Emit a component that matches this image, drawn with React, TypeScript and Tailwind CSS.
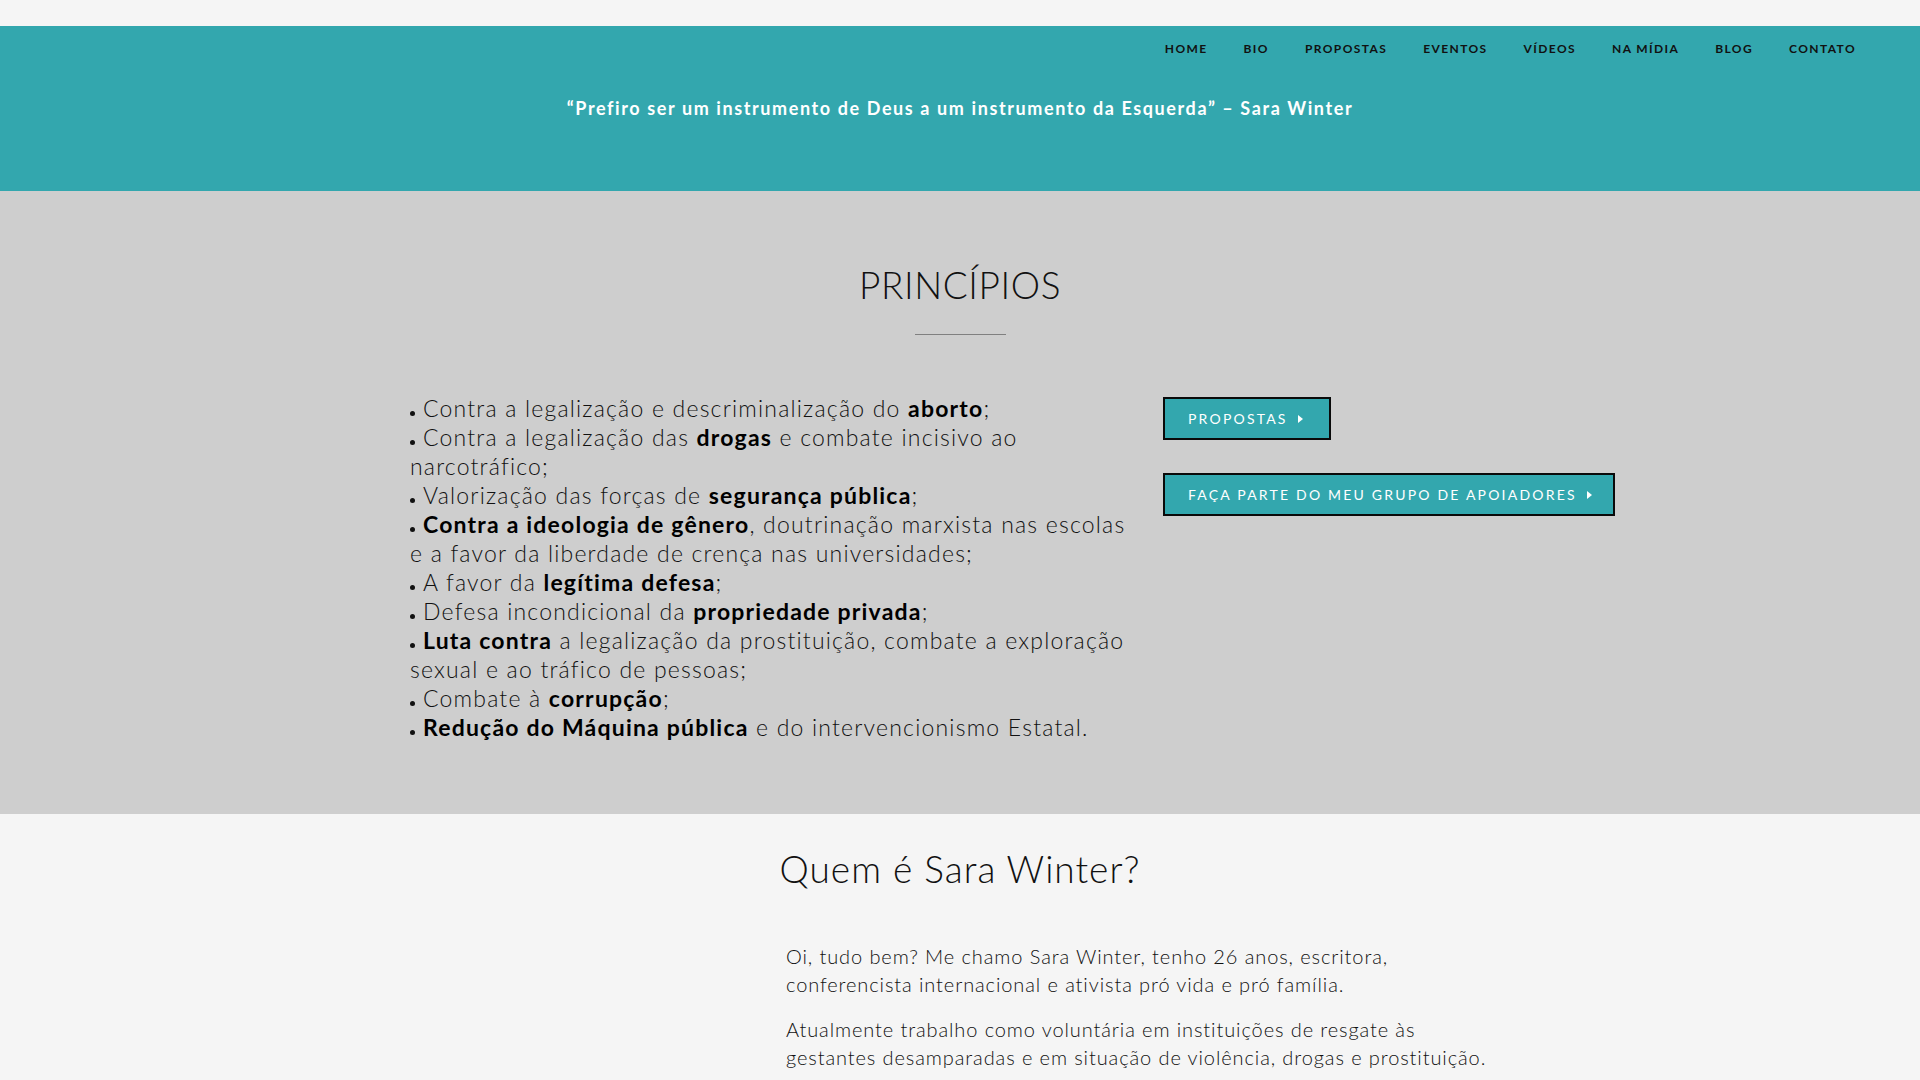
import React from 'react'

const navItems = ['HOME', 'BIO', 'PROPOSTAS', 'EVENTOS', 'VÍDEOS', 'NA MÍDIA', 'BLOG', 'CONTATO']

const principles: { parts: { text: string; bold?: boolean }[] }[] = [
  { parts: [{ text: 'Contra a legalização e descriminalização do ' }, { text: 'aborto', bold: true }, { text: ';' }] },
  {
    parts: [
      { text: 'Contra a legalização das ' },
      { text: 'drogas', bold: true },
      { text: ' e combate incisivo ao narcotráfico;' },
    ],
  },
  { parts: [{ text: 'Valorização das forças de ' }, { text: 'segurança pública', bold: true }, { text: ';' }] },
  {
    parts: [
      { text: 'Contra a ideologia de gênero', bold: true },
      { text: ', doutrinação marxista nas escolas e a favor da liberdade de crença nas universidades;' },
    ],
  },
  { parts: [{ text: 'A favor da ' }, { text: 'legítima defesa', bold: true }, { text: ';' }] },
  { parts: [{ text: 'Defesa incondicional da ' }, { text: 'propriedade privada', bold: true }, { text: ';' }] },
  {
    parts: [
      { text: 'Luta contra', bold: true },
      { text: ' a legalização da prostituição, combate a exploração sexual e ao tráfico de pessoas;' },
    ],
  },
  { parts: [{ text: 'Combate à ' }, { text: 'corrupção', bold: true }, { text: ';' }] },
  {
    parts: [
      { text: 'Redução do Máquina pública', bold: true },
      { text: ' e do intervencionismo Estatal.' },
    ],
  },
]

const Caret = () => (
  <svg width="5" height="8" viewBox="0 0 5 8" className="ml-[10px] inline-block shrink-0">
    <path d="M0 0 L5 4 L0 8 Z" fill="currentColor" />
  </svg>
)

const OutlineButton = ({ label, full }: { label: string; full?: boolean }) => (
  <button
    className={`flex h-[43px] items-center whitespace-nowrap border-2 border-[#0a0a0a] bg-[#33a7ae] pl-[23px] pr-[20px] text-[14px] tracking-[2.2px] text-white ${
      full ? 'w-full' : 'w-[168px]'
    }`}
  >
    {label}
    <Caret />
  </button>
)

const App = () => {
  return (
    <div className="min-h-screen bg-[#f5f5f5] font-['Lato','Liberation_Sans',sans-serif] text-[#111]">
      <div className="h-[26px]" />

      {/* header */}
      <header className="h-[165px] bg-[#33a7ae]">
        <nav className="flex justify-end pt-[10px] pr-[46px]">
          {navItems.map((item) => (
            <a key={item} className="px-[18px] text-[12px] font-bold leading-[26px] tracking-[1.4px] text-[#111]">
              {item}
            </a>
          ))}
        </nav>
        <p className="mt-[32px] text-center text-[18px] font-bold leading-[28px] tracking-[1.6px] text-white">
          “Prefiro ser um instrumento de Deus a um instrumento da Esquerda” – Sara Winter
        </p>
      </header>

      {/* principios */}
      <section className="bg-[#cecece] pt-[72px] pb-[72px]">
        <h2 className="text-center text-[37px] font-light leading-[44px] tracking-[0.6px] text-[#111]">PRINCÍPIOS</h2>
        <div className="mx-auto mt-[27px] h-px w-[91px] bg-[#808080]" />
        <div className="mx-auto mt-[59px] flex w-[1310px] pl-[105px]">
          <div className="w-[730px] text-[23px] font-light leading-[29px] tracking-[1.2px] text-[#111]">
            {principles.map((p, i) => (
              <div key={i}>
                <span className="mr-[8px] inline-block h-[5px] w-[5px] rounded-full bg-[#111] align-[1px]" />
                {p.parts.map((part, j) =>
                  part.bold ? (
                    <strong key={j} className="font-bold text-black">
                      {part.text}
                    </strong>
                  ) : (
                    <span key={j}>{part.text}</span>
                  )
                )}
              </div>
            ))}
          </div>
          <div className="ml-[23px] flex flex-1 flex-col items-start gap-[33px] pt-[3px]">
            <OutlineButton label="PROPOSTAS" />
            <OutlineButton label="FAÇA PARTE DO MEU GRUPO DE APOIADORES" full />
          </div>
        </div>
      </section>

      {/* quem é */}
      <section className="pt-[33px] pb-[40px]">
        <h2 className="text-center text-[37px] font-light leading-[44px] tracking-[1px] text-[#111]">Quem é Sara Winter?</h2>
        <div className="mx-auto mt-[51px] flex w-[1310px]">
          <div className="w-[481px]" />
          <div className="w-[725px] text-[20px] font-light leading-[28px] tracking-[0.9px] text-[#111]">
            <p>Oi, tudo bem? Me chamo Sara Winter, tenho 26 anos, escritora, conferencista internacional e ativista pró vida e pró família.</p>
            <p className="mt-[17px]">
              Atualmente trabalho como voluntária em instituições de resgate às gestantes desamparadas e em situação de violência, drogas e prostituição.
            </p>
          </div>
        </div>
      </section>
    </div>
  )
}

export default App
